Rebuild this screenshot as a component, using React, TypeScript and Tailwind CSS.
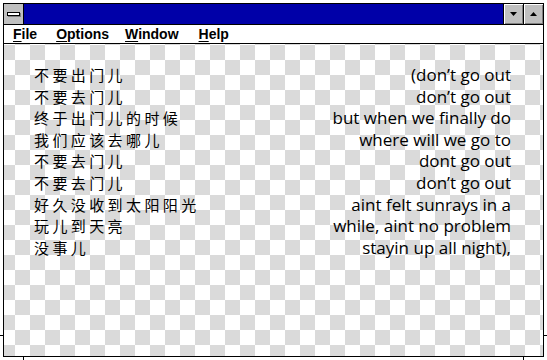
import React from "react";

const rows: [string, string][] = [
  ["不要出门儿", "(don’t go out"],
  ["不要去门儿", "don’t go out"],
  ["终于出门儿的时候", "but when we finally do"],
  ["我们应该去哪儿", "where will we go to"],
  ["不要去门儿", "dont go out"],
  ["不要去门儿", "don’t go out"],
  ["好久没收到太阳阳光", "aint felt sunrays in a"],
  ["玩儿到天亮", "while, aint no problem"],
  ["没事儿", "stayin up all night),"],
];

function MenuItem({ first, rest, cls }: { first: string; rest: string; cls: string }) {
  return (
    <span className={cls}>
      <span className="underline underline-offset-[2px] decoration-1">{first}</span>
      {rest}
    </span>
  );
}

export default function App() {
  return (
    <div className="relative w-[547px] h-[360px] bg-white p-[3px] overflow-hidden">
      {/* resize corner ticks */}
      <div className="absolute left-0 top-[335px] w-[3px] h-px bg-black" />
      <div className="absolute right-0 top-[335px] w-[3px] h-px bg-black" />
      <div className="absolute left-[23px] bottom-0 w-px h-[3px] bg-black" />
      <div className="absolute left-[523px] bottom-0 w-px h-[3px] bg-black" />

      <div className="flex flex-col w-full h-full border border-black">
        {/* title bar */}
        <div className="flex h-[21px] border-b border-black bg-[#0000a8]">
          <div className="flex items-center justify-center w-[20px] h-full bg-[#c0c0c0] border-r border-black">
            <div className="w-[13px] h-[4px] bg-white border border-black shadow-[1px_1px_0_#808080]" />
          </div>
          <div className="flex-1" />
          <div className="flex items-center justify-center w-[20px] h-full bg-[#c0c0c0] border-l border-black shadow-[inset_1px_1px_0_#ffffff,inset_-1px_-1px_0_#808080]">
            <svg width="7" height="4" viewBox="0 0 7 4"><path d="M0 0h7L3.5 4z" fill="#000" /></svg>
          </div>
          <div className="flex items-center justify-center w-[20px] h-full bg-[#c0c0c0] border-l border-black shadow-[inset_1px_1px_0_#ffffff,inset_-1px_-1px_0_#808080]">
            <svg width="7" height="4" viewBox="0 0 7 4"><path d="M3.5 0L7 4H0z" fill="#000" /></svg>
          </div>
        </div>
        {/* menu bar */}
        <div className="flex items-center h-[19px] border-b border-black bg-white font-['Liberation_Sans',Arial,sans-serif] font-bold text-[14px] text-black leading-none">
          <MenuItem cls="ml-[9px]" first="F" rest="ile" />
          <MenuItem cls="ml-[19px]" first="O" rest="ptions" />
          <MenuItem cls="ml-[16px]" first="W" rest="indow" />
          <MenuItem cls="ml-[20px]" first="H" rest="elp" />
        </div>
        {/* content */}
        <div className="flex-1 bg-white bg-fixed bg-[conic-gradient(#dadada_25%,#ffffff_0_50%,#dadada_0_75%,#ffffff_0)] bg-[length:30px_30px] pt-[20px] pl-[30px] pr-[32px]">
          <div className="flex justify-between">
            <div className="flex flex-col font-['Noto_Sans_CJK_SC',sans-serif] font-normal text-[15px] tracking-[3.4px] leading-[21.6px] text-black">
              {rows.map((r, i) => (
                <div key={i} className="h-[21.6px]">{r[0]}</div>
              ))}
            </div>
            <div className="flex flex-col items-end font-['Open_Sans',sans-serif] font-medium text-[17px] leading-[21.6px] text-black">
              {rows.map((r, i) => (
                <div key={i} className="h-[21.6px]">{r[1]}</div>
              ))}
            </div>
          </div>
        </div>
      </div>
    </div>
  );
}
